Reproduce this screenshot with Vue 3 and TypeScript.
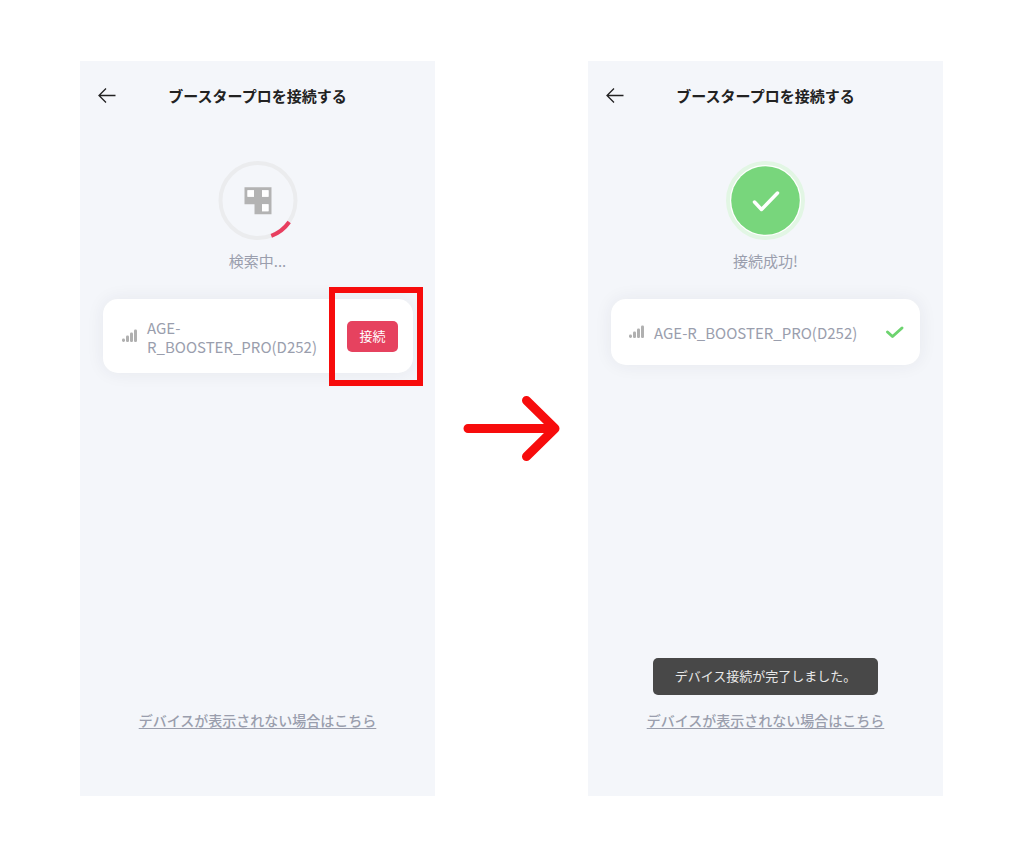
<script setup lang="ts">
interface Screen {
  id: string
  connected: boolean
  status: string
}

const title = 'ブースタープロを接続する'
const device = 'AGE-R_BOOSTER_PRO(D252)'
const help = 'デバイスが表示されない場合はこちら'

const screens: Screen[] = [
  { id: 'searching', connected: false, status: '検索中...' },
  { id: 'connected', connected: true, status: '接続成功!' },
]
</script>

<template>
  <main class="guide">
    <template v-for="(screen, index) in screens" :key="screen.id">
      <div v-if="index > 0" class="step">
        <svg width="98" height="68" viewBox="0 0 98 68" aria-hidden="true">
          <path d="M5 33.500H91.500M63.500 5.500L92 33.500L63.500 61.500" />
        </svg>
      </div>

      <section class="phone">
        <header class="bar">
          <button type="button" class="back" aria-label="戻る">
            <svg width="18" height="16" viewBox="0 0 18 16" aria-hidden="true">
              <path d="M17.500 7.500H1M8 0.500L1 7.500L8 14.500" />
            </svg>
          </button>
          <h1>{{ title }}</h1>
        </header>

        <svg
          v-if="!screen.connected"
          class="badge"
          width="80"
          height="80"
          viewBox="0 0 80 80"
          aria-hidden="true"
        >
          <circle class="ring" cx="40" cy="39.500" r="37.500" />
          <path class="progress" d="M71.200 61A37.800 37.800 0 0 1 53.300 74.800" />
          <path class="logo" fill-rule="evenodd" d="M26.500 26.200H53.500V53.200H36.500V43.200H26.500ZM29.500 29.200V35.700H36V29.200ZM44 29.200V35.700H50.500V29.200ZM44 43.200V50.200H50.500V43.200Z" />
          <path class="window" d="M29.500 29.200H36V35.700H29.500ZM44 29.200H50.500V35.700H44ZM44 43.200H50.500V50.200H44Z" />
        </svg>
        <svg v-else class="badge" width="80" height="80" viewBox="0 0 80 80" aria-hidden="true">
          <circle class="halo" cx="39.500" cy="39.500" r="37.500" />
          <circle class="disc" cx="39.500" cy="39.500" r="34.300" />
          <path class="tick" d="M28.500 41L35.500 48.500L51.500 32" />
        </svg>

        <p class="status">{{ screen.status }}</p>

        <div class="card" :class="{ done: screen.connected }">
          <svg class="signal" width="16" height="14" viewBox="0 0 16 14" aria-hidden="true">
            <rect x="0" y="9.500" width="3" height="3.500" rx="1.400" />
            <rect x="4" y="6.500" width="3" height="6.500" rx="1.200" />
            <rect x="8" y="3.500" width="3" height="9.500" rx="1.200" />
            <rect x="12" y="0.500" width="3" height="12.500" rx="1.200" />
          </svg>
          <span class="name">{{ device }}</span>
          <template v-if="!screen.connected">
            <button type="button" class="connect">接続</button>
            <span class="highlight" aria-hidden="true"></span>
          </template>
          <svg v-else class="check" width="20" height="14" viewBox="0 0 20 14" aria-hidden="true">
            <path d="M2.500 7L7.500 11.500L17 3" />
          </svg>
        </div>

        <footer class="foot">
          <div v-if="screen.connected" class="toast" role="status">デバイス接続が完了しました。</div>
          <a href="#help">{{ help }}</a>
        </footer>
      </section>
    </template>
  </main>
</template>

<style>
body {
  margin: 0;
  background: #fff;
}
</style>

<style scoped>
.guide {
  box-sizing: border-box;
  display: grid;
  grid-template-columns: 1fr 153px 1fr;
  min-height: 100vh;
  padding: 61px 81px 55px 80px;
  font-family: "Noto Sans CJK JP", sans-serif;
  color: #9a9ead;
}

.step {
  display: flex;
  align-items: center;
  justify-content: center;
}

.step path {
  fill: none;
  stroke: #f70c0c;
  stroke-width: 9;
  stroke-linecap: round;
  stroke-linejoin: round;
}

.phone {
  display: flex;
  flex-direction: column;
  align-items: center;
  background: #f4f6fa;
}

.bar {
  display: grid;
  grid-template-columns: 36px 1fr 36px;
  align-items: center;
  align-self: stretch;
  height: 70px;
}

.back {
  display: flex;
  justify-content: flex-end;
  padding: 0;
  border: 0;
  background: none;
}

.back path {
  fill: none;
  stroke: #222;
  stroke-width: 1.3;
}

h1 {
  margin: 0;
  font-size: 15px;
  font-weight: 700;
  line-height: 24px;
  text-align: center;
  color: #222;
}

.badge {
  margin-top: 30px;
}

.ring {
  fill: none;
  stroke: #ebecee;
  stroke-width: 4;
}

.progress {
  fill: none;
  stroke: #e83e5f;
  stroke-width: 4;
}

.logo {
  fill: #b3b3b3;
}

.window {
  fill: #fff;
}

.halo {
  fill: #fff;
  stroke: #e2f6e4;
  stroke-width: 4;
}

.disc {
  fill: #78d67c;
}

.tick {
  fill: none;
  stroke: #fff;
  stroke-width: 3.5;
  stroke-linecap: round;
  stroke-linejoin: round;
}

.status {
  margin: 8px 0 26px;
  font-size: 15px;
  line-height: 24px;
}

.card {
  position: relative;
  box-sizing: border-box;
  display: flex;
  align-items: center;
  align-self: stretch;
  min-height: 74px;
  margin: 0 22px 0 23px;
  padding: 0 15px 0 19px;
  border-radius: 15px;
  background: #fff;
  box-shadow: 0 0 18px rgba(40, 40, 70, 0.07);
}

.card.done {
  min-height: 66px;
  margin-right: 23px;
  padding-left: 18px;
}

.signal {
  flex: none;
  fill: #b0b0b0;
}

.name {
  flex: 1;
  margin: 0 12px 0 9px;
  padding-top: 1px;
  font-size: 15px;
  line-height: 19px;
}

.connect {
  padding: 0;
  width: 51px;
  height: 31px;
  border: 0;
  border-radius: 5px;
  background: #e6425f;
  color: #fff;
  font: 13px/20px "Noto Sans CJK JP", sans-serif;
}

.highlight {
  position: absolute;
  top: -12px;
  right: -10px;
  bottom: -13px;
  box-sizing: border-box;
  width: 94px;
  border: 6px solid #f70c0c;
  pointer-events: none;
}

.check path {
  fill: none;
  stroke: #6dd36f;
  stroke-width: 3;
  stroke-linecap: round;
  stroke-linejoin: round;
}

.foot {
  display: flex;
  flex-direction: column;
  align-items: center;
  gap: 14px;
  margin-top: auto;
  padding-bottom: 65px;
}

.toast {
  padding: 8px 22px 9px;
  border-radius: 5px;
  background: #484848;
  color: #e8e8e8;
  font-size: 13px;
  line-height: 20px;
}

.foot a {
  font-size: 14px;
  font-weight: 500;
  line-height: 22px;
  color: #9a9ead;
  text-underline-offset: 2px;
}
</style>
